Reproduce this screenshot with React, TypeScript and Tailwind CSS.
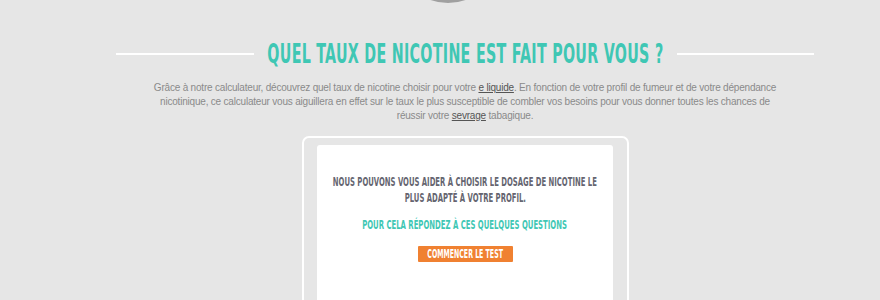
import React from 'react';

const condensed = "font-['Liberation_Sans_Narrow','DejaVu_Sans_Condensed','Liberation_Sans',sans-serif] font-bold uppercase";

function Line({ children, className = '' }: { children: React.ReactNode; className?: string }) {
  return (
    <div className="flex justify-center whitespace-nowrap">
      <span className={`inline-block ${className}`}>{children}</span>
    </div>
  );
}

export default function App() {
  return (
    <div className="w-[880px] h-[300px] overflow-hidden bg-[#e6e6e6] font-['Liberation_Sans',Arial,sans-serif]">
      {/* bits of the section above, cut off by the viewport */}
      <div className="h-[6px] overflow-hidden flex">
        <span className="ml-[155px] -mt-[9px] text-[9px] leading-[12px] text-[#999]">Mobile</span>
        <div className="ml-[216px] -mt-[97px] w-[100px] h-[100px] shrink-0 rounded-full border-[3px] border-[#a0a0a0]" />
      </div>

      <div className="ml-[116px] w-[698px]">
        <div className="mt-[33px] flex items-center gap-[15px]">
          <div className="flex-1 h-[2px] bg-white" />
          <div className="w-[393px] flex justify-center whitespace-nowrap">
            <span className={`${condensed} inline-block scale-x-[0.587] text-[27px] leading-[30px] text-[#3fc7b4] tracking-[0.5px]`}>
              Quel taux de nicotine est fait pour vous ?
            </span>
          </div>
          <div className="flex-1 h-[2px] bg-white" />
        </div>

        <p className="mt-[12px] px-[10px] text-center text-[10px] leading-[14px] tracking-[-0.2px] text-[#8a8a8a] whitespace-nowrap">
          Grâce à notre calculateur, découvrez quel taux de nicotine choisir pour votre{' '}
          <a className="underline text-[#555]">e liquide</a>. En fonction de votre profil de fumeur et de votre dépendance
          <br />
          nicotinique, ce calculateur vous aiguillera en effet sur le taux le plus susceptible de combler vos besoins pour
          vous donner toutes les chances de
          <br />
          réussir votre <a className="underline text-[#555]">sevrage</a> tabagique.
        </p>

        <div className="mt-[13px] ml-[186px] w-[327px] h-[200px] rounded-[7px] border-2 border-white pt-[7px] pl-[13px] pr-[14px]">
          <div className="h-full rounded-[3px] bg-white flex flex-col items-stretch pt-[29px]">
            <div className={`${condensed} text-[13px] leading-[16px] text-[#656570]`}>
              <Line className="scale-x-[0.587]">Nous pouvons vous aider à choisir le dosage de nicotine le</Line>
              <Line className="scale-x-[0.587]">plus adapté à votre profil.</Line>
            </div>
            <div className={`${condensed} mt-[11px] text-[13px] leading-[16px] text-[#3fc7b4]`}>
              <Line className="scale-x-[0.59]">Pour cela répondez à ces quelques questions</Line>
            </div>
            <div className="mt-[13px] flex justify-center">
              <button className="w-[95px] h-[16px] rounded-[1px] bg-[#f08131] flex items-center justify-center overflow-visible">
                <span className={`${condensed} inline-block whitespace-nowrap scale-x-[0.58] text-[12px] leading-[16px] text-white`}>
                  Commencer le test
                </span>
              </button>
            </div>
          </div>
        </div>
      </div>
    </div>
  );
}
